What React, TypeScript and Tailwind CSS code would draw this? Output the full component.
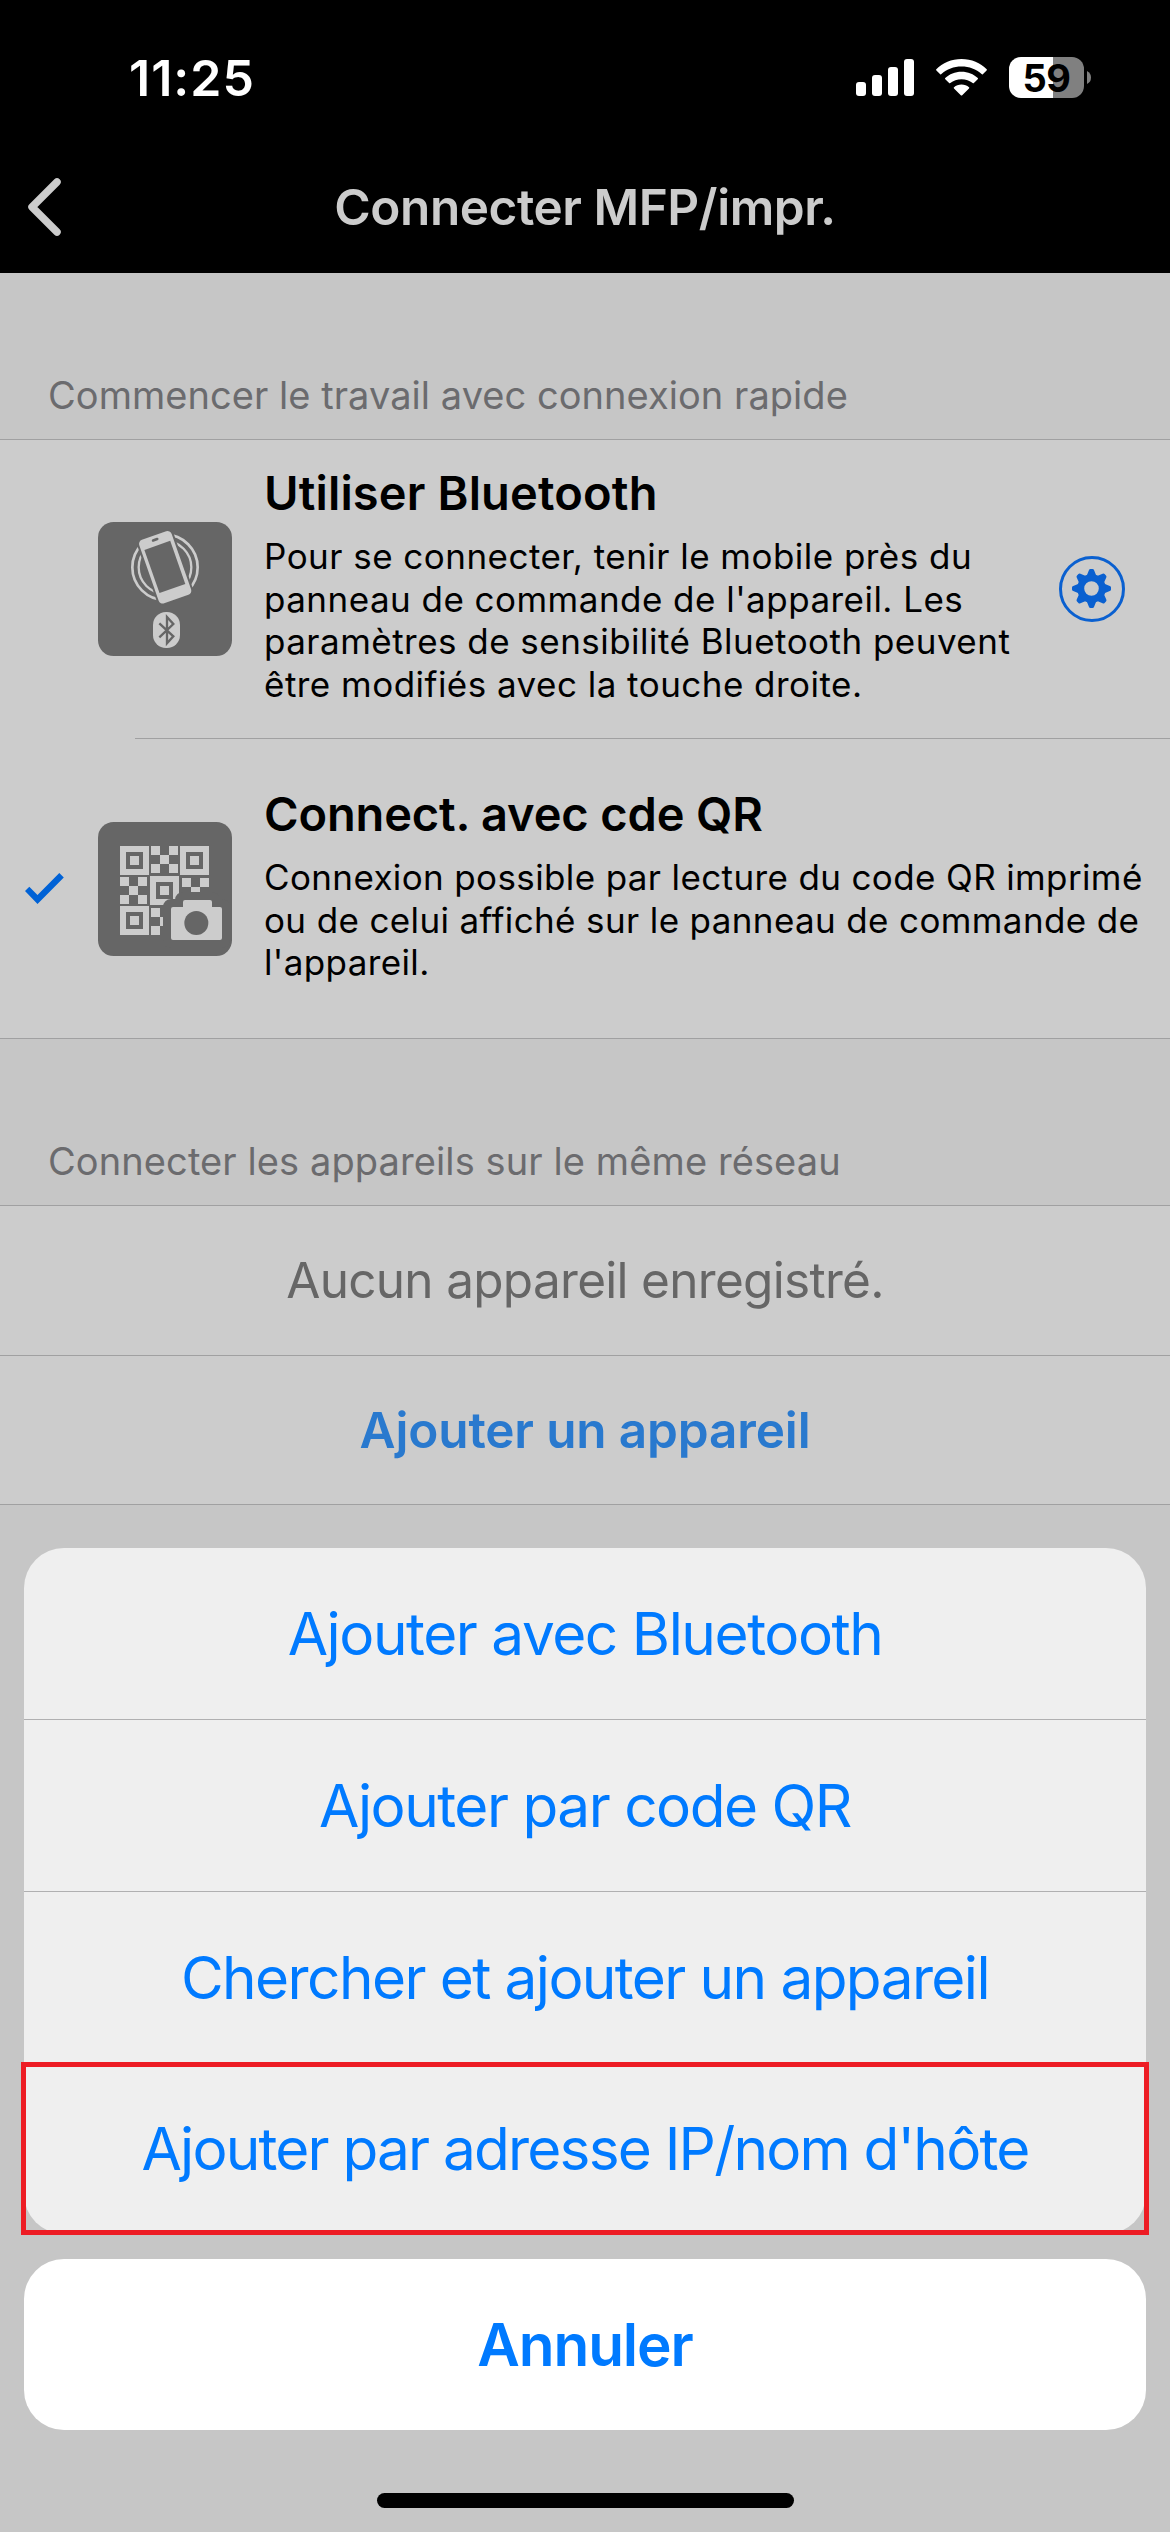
/**
 * ConnectDeviceScreen
 *
 * Printer connection screen with the "add a device" action sheet opened.
 */

import React from 'react';
import { clsx } from 'clsx';

interface SheetAction {
    id: string;
    label: string;
    /** Letter spacing of the label */
    tracking: string;
    highlighted?: boolean;
}

const SHEET_ACTIONS: SheetAction[] = [
    { id: 'bluetooth', label: 'Ajouter avec Bluetooth', tracking: 'tracking-[-1.45px]' },
    { id: 'qr', label: 'Ajouter par code QR', tracking: 'tracking-[-1.5px]' },
    { id: 'search', label: 'Chercher et ajouter un appareil', tracking: 'tracking-[-1.6px]' },
    { id: 'ip', label: "Ajouter par adresse IP/nom d'hôte", tracking: 'tracking-[-1.8px]', highlighted: true },
];

function SignalIcon() {
    return (
        <svg width="58" height="37" viewBox="0 0 58 37" fill="#fff">
            <rect x="0" y="23" width="10" height="14" rx="3" />
            <rect x="16" y="16" width="10" height="21" rx="3" />
            <rect x="32" y="8" width="10" height="29" rx="3" />
            <rect x="48" y="0" width="10" height="37" rx="3" />
        </svg>
    );
}

function WifiIcon() {
    return (
        <svg width="51" height="37" viewBox="0 0 51 37" fill="#fff">
            <path d="M25.5 0C35.5 0 44.5 3.9 50.7 10.2Q51.2 10.8 50.6 11.4L46.8 15.2Q46.2 15.7 45.6 15.1C40.2 10.1 33.2 7.6 25.5 7.6S10.8 10.1 5.4 15.1Q4.8 15.7 4.2 15.2L.4 11.4Q-.2 10.8 .3 10.2C6.5 3.9 15.5 0 25.5 0Z" />
            <path d="M25.5 12.7C31.9 12.7 37.6 15 41.8 19.1Q42.3 19.7 41.7 20.3L37.9 24.1Q37.3 24.6 36.7 24.1C33.6 21.5 29.8 20.2 25.5 20.2S17.4 21.5 14.3 24.1Q13.7 24.6 13.1 24.1L9.3 20.3Q8.7 19.7 9.2 19.1C13.4 15 19.1 12.7 25.5 12.7Z" />
            <path d="M25.5 25.5C28.4 25.5 31 26.5 33 28.2Q33.6 28.8 33 29.4L26.2 36.3Q25.5 36.9 24.8 36.3L18 29.4Q17.4 28.8 18 28.2C20 26.5 22.6 25.5 25.5 25.5Z" />
        </svg>
    );
}

function Battery() {
    return (
        <div className="flex items-center gap-[3px]">
            <div className="flex h-[41px] w-[75px] items-center justify-center rounded-[12px] bg-[linear-gradient(to_right,#fff_59%,#808080_59%)] text-[38px] leading-none font-bold tracking-[-0.5px] text-black">
                59
            </div>
            <svg width="4" height="13" viewBox="0 0 4 13" fill="#808080">
                <path d="M0 0Q4 2 4 6.5T0 13Z" />
            </svg>
        </div>
    );
}

function BluetoothPhoneIcon() {
    return (
        <svg className="h-[134px] w-[134px] shrink-0" viewBox="24 36 402 402" fill="none">
            <rect x="24" y="36" width="402" height="402" rx="47" fill="#666" />
            <circle cx="225" cy="172" r="98" stroke="#ccc" strokeWidth="8" />
            <circle cx="225" cy="172" r="79" stroke="#ccc" strokeWidth="7" />
            <g transform="rotate(-19.3 225.5 172)">
                <rect x="168" y="66" width="115" height="212" rx="18" fill="#666" />
                <rect x="174" y="71" width="103" height="202" rx="13" fill="#ccc" />
                <rect x="184" y="102" width="82" height="137" fill="#666" />
                <rect x="214" y="80" width="21" height="8" rx="4" fill="#666" />
            </g>
            <rect x="189" y="306" width="81" height="108" rx="39" fill="#ccc" />
            <path d="M208 340L250 379L231 400V321L250 342L208 382" stroke="#666" strokeWidth="7" />
        </svg>
    );
}

function Finder({ x, y }: { x: number; y: number }) {
    return (
        <g transform={`translate(${x} ${y})`}>
            <path fillRule="evenodd" d="M0 0H87V87H0ZM18 18V69H69V18Z" />
            <rect x="30" y="30" width="27" height="27" />
        </g>
    );
}

function QrCameraIcon() {
    return (
        <svg className="h-[134px] w-[134px] shrink-0" viewBox="24 36 402 402" fill="#ccc">
            <rect x="24" y="36" width="402" height="402" rx="47" fill="#666" />
            <Finder x={90} y={108} />
            <Finder x={270} y={108} />
            <Finder x={180} y={198} />
            <Finder x={90} y={288} />
            <path d="M183 108h27v27h27v-27h27v27h-27v27h27v27h-27v-27h-27v27h-27v-27h27v-27h-27Z" />
            <path d="M90 201h27v27h27v-27h27v27h-27v27h27v27h-27v-27h-27v27h-27v-27h27v-27h-27Z" />
            <path d="M276 204h27v27h27v-27h27v27h-27v15h-27v-15h-27Z" />
            <path d="M183 294h27v27h9v27h-9v27h-27v-27h27v-27h-27Z" />
            {/* Camera, with a margin cut out of the code behind it */}
            <path
                d="M243 291H279V270H366V291H396V390H243Z"
                fill="#666"
                stroke="#666"
                strokeWidth="48"
                strokeLinejoin="round"
            />
            <path d="M249 291H279V276Q279 270 285 270H360Q366 270 366 276V291H390Q396 291 396 297V384Q396 390 390 390H249Q243 390 243 384V297Q243 291 249 291Z" />
            <circle cx="319" cy="339" r="36" fill="#666" />
        </svg>
    );
}

function GearIcon() {
    return (
        <svg width="66" height="66" viewBox="0 0 66 66" fill="none" className="shrink-0">
            <circle cx="33" cy="33" r="31.5" stroke="#0a60d0" strokeWidth="3" />
            <g fill="#0a60d0" transform="translate(32.5 32.5)">
                {[0, 45, 90, 135, 180, 225, 270, 315].map((angle) => (
                    <path
                        key={angle}
                        transform={`rotate(${angle})`}
                        d="M-5.5 -11L-2.6 -18.3Q-2.2 -19.5 -1 -19.5H1Q2.2 -19.5 2.6 -18.3L5.5 -11Z"
                    />
                ))}
            </g>
            <circle cx="32.5" cy="32.5" r="10.8" stroke="#0a60d0" strokeWidth="7" />
        </svg>
    );
}

function SectionHeader({ children, className }: { children: React.ReactNode; className?: string }) {
    return (
        <div className={clsx('flex h-[166px] items-end pb-[24px] pl-[48px]', className)}>
            <h2 className="text-[38px] leading-[40px] text-[#6b6b6e]">{children}</h2>
        </div>
    );
}

function StatusBar() {
    return (
        <div className="flex h-[155px] items-center justify-between pr-[79px] pl-[129px]">
            <span className="text-[50px] leading-none font-semibold tracking-[1px] text-white">11:25</span>
            <div className="flex items-center gap-[22px]">
                <SignalIcon />
                <WifiIcon />
                <Battery />
            </div>
        </div>
    );
}

function NavBar() {
    return (
        <div className="grid h-[118px] grid-cols-[100px_1fr_100px] items-center pb-[14px]">
            <svg width="36" height="60" viewBox="0 0 36 60" fill="none" className="ml-[26px]">
                <path d="M31 5L6 30L31 55" stroke="#ccc" strokeWidth="7.5" strokeLinecap="round" strokeLinejoin="round" />
            </svg>
            <h1 className="text-center text-[49.5px] leading-[60px] font-semibold tracking-[-0.45px] text-[#ccc]">
                Connecter MFP/impr.
            </h1>
        </div>
    );
}

function ActionSheet() {
    return (
        <div className="absolute inset-x-0 top-[1548px] flex flex-col px-[24px] text-[58.5px] text-[#007aff]">
            <div className="h-[686px] rounded-[40px] bg-[#efefef]">
                {SHEET_ACTIONS.map((action, i) => (
                    <div
                        key={action.id}
                        className={clsx(
                            'relative flex items-center justify-center',
                            i < 2 ? 'h-[172px] border-b border-[#b0b0b1]' : 'h-[171px]',
                            action.tracking
                        )}
                    >
                        {action.label}
                        {action.highlighted && (
                            <div className="absolute -inset-x-[3px] top-[-1px] h-[173px] border-[5px] border-[#ed1c24]" />
                        )}
                    </div>
                ))}
            </div>
            <div className="mt-[25px] flex h-[171px] items-center justify-center rounded-[40px] bg-white font-semibold tracking-[-1.1px]">
                Annuler
            </div>
            <div className="mx-auto mt-[63px] h-[15px] w-[417px] rounded-full bg-black" />
        </div>
    );
}

export default function App() {
    return (
        <div className="relative h-[2532px] w-[1170px] overflow-hidden bg-[#c6c6c6] font-['Inter','Liberation_Sans',sans-serif] text-black">
            <header className="h-[273px] bg-black">
                <StatusBar />
                <NavBar />
            </header>

            <SectionHeader className="tracking-[0.05px]">Commencer le travail avec connexion rapide</SectionHeader>
            <div className="border-y border-[#a0a0a1] bg-[#ccc]">
                {/* Bluetooth */}
                <div className="flex h-[298px] items-center">
                    <div className="w-[98px] shrink-0" />
                    <BluetoothPhoneIcon />
                    <div className="ml-[32px] w-[780px] shrink-0 self-start pt-[23px]">
                        <h3 className="text-[47px] leading-[60px] font-semibold tracking-[0.15px]">Utiliser Bluetooth</h3>
                        <p className="mt-[12px] text-[35px] leading-[42.7px] tracking-[0.47px]">
                            Pour se connecter, tenir le mobile près du panneau de commande de l'appareil. Les paramètres de
                            sensibilité Bluetooth peuvent être modifiés avec la touche droite.
                        </p>
                    </div>
                    <div className="ml-[15px]">
                        <GearIcon />
                    </div>
                </div>
                <div className="ml-[135px] h-px bg-[#a0a0a1]" />

                {/* QR code */}
                <div className="flex h-[299px] items-center">
                    <div className="w-[98px] shrink-0 pl-[25px]">
                        <svg width="39" height="31" viewBox="0 0 39 31" fill="#0062d6">
                            <path d="M0 18L4.3 13.7L12.5 22L34.3 0L38.8 4.5L12.5 31Z" />
                        </svg>
                    </div>
                    <QrCameraIcon />
                    <div className="ml-[32px] w-[890px] shrink-0 self-start pt-[45px]">
                        <h3 className="text-[47px] leading-[60px] font-semibold tracking-[-0.15px]">Connect. avec cde QR</h3>
                        <p className="mt-[12px] text-[35px] leading-[42.7px] tracking-[0.37px]">
                            Connexion possible par lecture du code QR imprimé ou de celui affiché sur le panneau de commande
                            de l'appareil.
                        </p>
                    </div>
                </div>
            </div>

            <SectionHeader className="tracking-[0.1px]">Connecter les appareils sur le même réseau</SectionHeader>
            <div className="border-y border-[#a0a0a1] bg-[#ccc] text-center text-[49.5px]">
                <div className="flex h-[150px] items-center justify-center border-b border-[#a0a0a1] tracking-[-0.7px] text-[#666]">
                    Aucun appareil enregistré.
                </div>
                <div className="flex h-[148px] items-center justify-center font-semibold tracking-[-0.15px] text-[#2979ce]">
                    Ajouter un appareil
                </div>
            </div>

            <ActionSheet />
        </div>
    );
}
